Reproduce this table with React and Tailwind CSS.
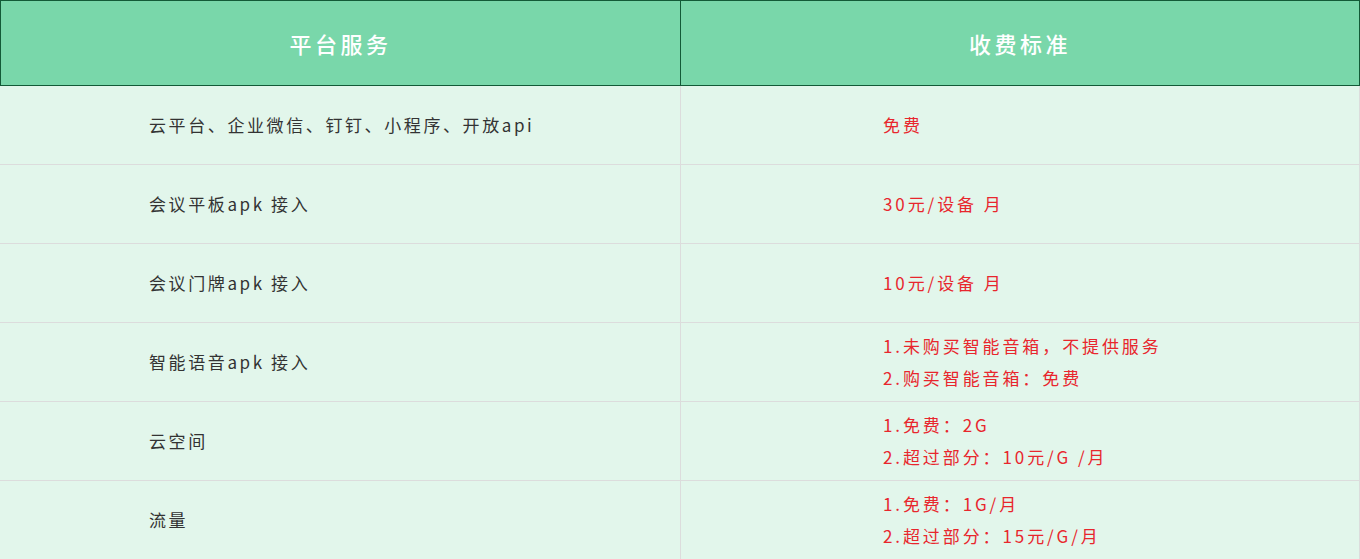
const rows = [
  { service: "云平台、企业微信、钉钉、小程序、开放api", fee: ["免费"] },
  { service: "会议平板apk 接入", fee: ["30元/设备 月"] },
  { service: "会议门牌apk 接入", fee: ["10元/设备 月"] },
  { service: "智能语音apk 接入", fee: ["1.未购买智能音箱，不提供服务", "2.购买智能音箱：免费"] },
  { service: "云空间", fee: ["1.免费：2G", "2.超过部分：10元/G /月"] },
  { service: "流量", fee: ["1.免费：1G/月", "2.超过部分：15元/G/月"] },
];

export default function App() {
  return (
    <div
      className="w-[1360px] h-[559px] bg-[#e2f6eb]"
      style={{ fontFamily: '"Noto Sans CJK SC", "Noto Sans", sans-serif' }}
    >
      {/* Header */}
      <div className="grid grid-cols-[680px_1fr] h-[86px] bg-[#79d7aa] border border-[#135a37] text-white text-[22px] font-medium tracking-[3.5px]">
        <div className="flex items-center justify-center border-r border-[#135a37]">平台服务</div>
        <div className="flex items-center justify-center">收费标准</div>
      </div>

      {/* Body */}
      {rows.map((row) => (
        <div
          key={row.service}
          className="grid grid-cols-[681px_1fr] h-[79px] border-b border-r border-[#dcdcdc] text-[17px] tracking-[2.6px]"
        >
          <div className="flex items-center pl-[149px] text-[#333333] border-r border-[#dcdcdc]">
            {row.service}
          </div>
          <div className="flex flex-col justify-center pl-[202px] text-[#e8262d] leading-[32px] tracking-[2.9px]">
            {row.fee.map((line) => (
              <div key={line}>{line}</div>
            ))}
          </div>
        </div>
      ))}
    </div>
  );
}
